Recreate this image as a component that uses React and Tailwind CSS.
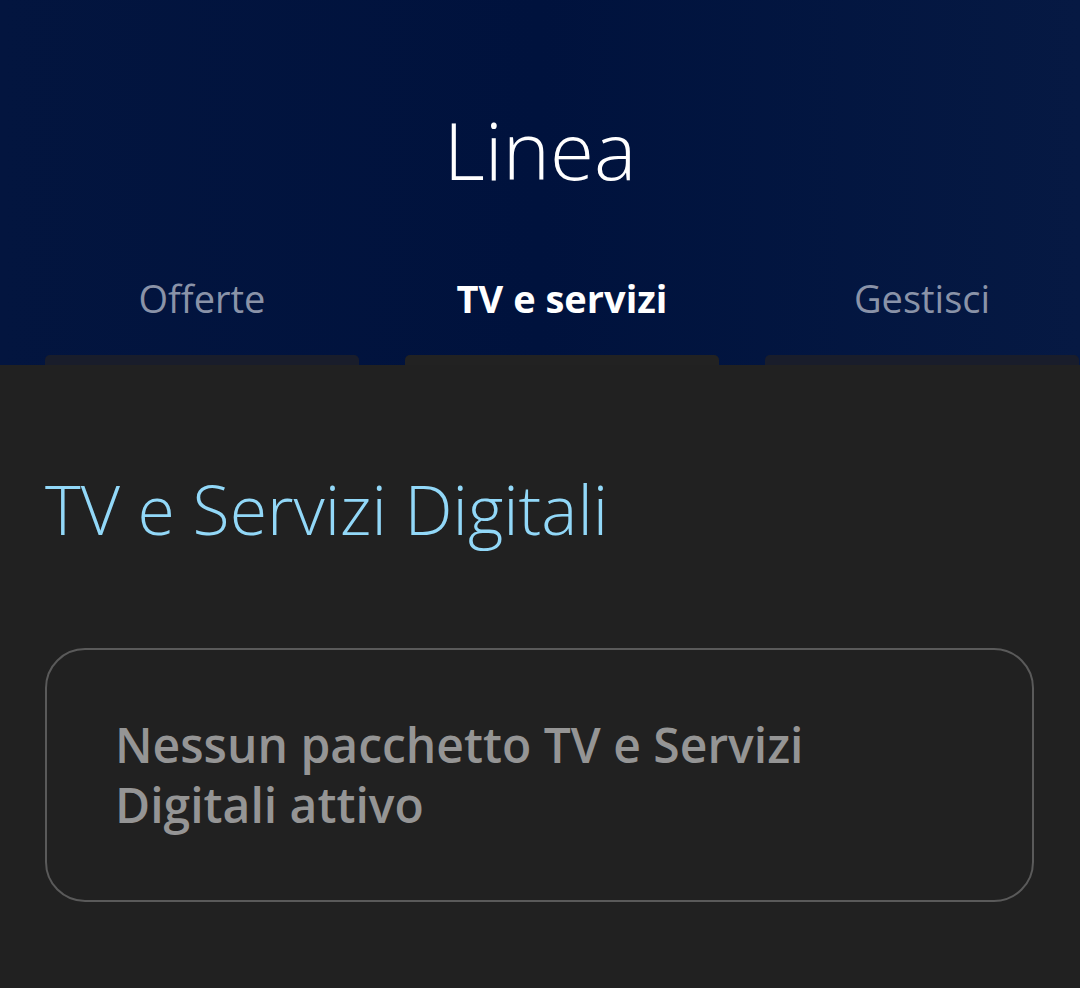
const TABS = [
  { label: 'Offerte', active: false },
  { label: 'TV e servizi', active: true },
  { label: 'Gestisci', active: false },
]

export default function App() {
  return (
    <div
      className="w-[1080px] h-[988px] overflow-hidden bg-[#212121]"
      style={{ fontFamily: '"Open Sans", "Noto Sans", sans-serif' }}
    >
      <header className="h-[365px] flex flex-col bg-gradient-to-r from-[#03153f] via-[#00123d] to-[#061943]">
        <h1 className="mt-[94px] h-[110px] text-center text-[80px] font-light leading-[110px] text-white">
          Linea
        </h1>
        <div className="mt-auto flex pl-[45px] gap-[46px]">
          {TABS.map((t) => (
            <div key={t.label} className="w-[314px] shrink-0 flex flex-col items-center">
              <span
                className={`h-[52px] text-[38px] leading-[52px] ${
                  t.active ? 'font-bold text-white' : 'font-normal text-[#8a93a8]'
                }`}
              >
                {t.label}
              </span>
              <div
                className={`mt-[31px] h-[10px] w-full rounded-t-[5px] ${
                  t.active ? 'bg-[#222222]' : 'bg-[#191d2b]'
                }`}
              />
            </div>
          ))}
        </div>
      </header>

      <main className="px-[45px]">
        <h2 className="mt-[104px] text-[68px] font-light leading-[80px] text-[#92d8f8]">
          TV e Servizi Digitali
        </h2>
        <div className="mt-[99px] w-[989px] h-[254px] rounded-[40px] border-2 border-[#5a5a5a] flex items-center pl-[68px] pr-[30px]">
          <p className="text-[48px] font-semibold leading-[60px] text-[#959595]">
            Nessun pacchetto TV e Servizi
            <br />
            Digitali attivo
          </p>
        </div>
      </main>
    </div>
  )
}
